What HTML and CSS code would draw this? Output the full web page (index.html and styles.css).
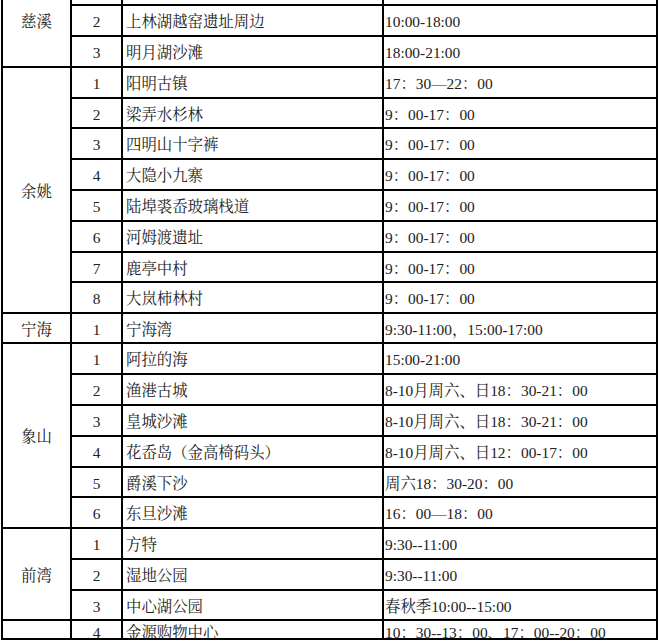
FILE: index.html
```html
<!DOCTYPE html>
<html lang="zh-CN">
<head>
<meta charset="utf-8">
<title>夜游景点开放时间</title>
<link rel="stylesheet" href="styles.css">
</head>
<body>
<table class="sched">
  <colgroup>
    <col class="c-city"><col class="c-num"><col class="c-name"><col class="c-time">
  </colgroup>
  <tbody>
    <tr class="r31"><td class="city" rowspan="3">慈溪</td><td class="num"></td><td class="name"></td><td class="time"></td></tr>
    <tr class="r31"><td class="num">2</td><td class="name">上林湖越窑遗址周边</td><td class="time">10:00-18:00</td></tr>
    <tr class="r31"><td class="num">3</td><td class="name">明月湖沙滩</td><td class="time">18:00-21:00</td></tr>

    <tr class="r31"><td class="city" rowspan="8">余姚</td><td class="num">1</td><td class="name">阳明古镇</td><td class="time">17：30—22：00</td></tr>
    <tr class="r30"><td class="num">2</td><td class="name">梁弄水杉林</td><td class="time">9：00-17：00</td></tr>
    <tr class="r31"><td class="num">3</td><td class="name">四明山十字裤</td><td class="time">9：00-17：00</td></tr>
    <tr class="r31"><td class="num">4</td><td class="name">大隐小九寨</td><td class="time">9：00-17：00</td></tr>
    <tr class="r31"><td class="num">5</td><td class="name">陆埠裘岙玻璃栈道</td><td class="time">9：00-17：00</td></tr>
    <tr class="r31"><td class="num">6</td><td class="name">河姆渡遗址</td><td class="time">9：00-17：00</td></tr>
    <tr class="r30"><td class="num">7</td><td class="name">鹿亭中村</td><td class="time">9：00-17：00</td></tr>
    <tr class="r31"><td class="num">8</td><td class="name">大岚柿林村</td><td class="time">9：00-17：00</td></tr>

    <tr class="r30"><td class="city">宁海</td><td class="num">1</td><td class="name">宁海湾</td><td class="time">9:30-11:00，15:00-17:00</td></tr>

    <tr class="r31"><td class="city" rowspan="6">象山</td><td class="num">1</td><td class="name">阿拉的海</td><td class="time">15:00-21:00</td></tr>
    <tr class="r31"><td class="num">2</td><td class="name">渔港古城</td><td class="time">8-10月周六、日18：30-21：00</td></tr>
    <tr class="r31"><td class="num">3</td><td class="name">皇城沙滩</td><td class="time">8-10月周六、日18：30-21：00</td></tr>
    <tr class="r31"><td class="num">4</td><td class="name">花岙岛（金高椅码头）</td><td class="time">8-10月周六、日12：00-17：00</td></tr>
    <tr class="r30"><td class="num">5</td><td class="name">爵溪下沙</td><td class="time">周六18：30-20：00</td></tr>
    <tr class="r31"><td class="num">6</td><td class="name">东旦沙滩</td><td class="time">16：00—18：00</td></tr>

    <tr class="r31"><td class="city" rowspan="3">前湾</td><td class="num">1</td><td class="name">方特</td><td class="time">9:30--11:00</td></tr>
    <tr class="r31"><td class="num">2</td><td class="name">湿地公园</td><td class="time">9:30--11:00</td></tr>
    <tr class="r30"><td class="num">3</td><td class="name">中心湖公园</td><td class="time">春秋季10:00--15:00</td></tr>

    <tr class="r19 cut"><td class="city"><div class="clip"></div></td><td class="num"><div class="clip">4</div></td><td class="name"><div class="clip">金源购物中心</div></td><td class="time"><div class="clip">10：30--13：00、17：00--20：00</div></td></tr>
  </tbody>
</table>
</body>
</html>
```

FILE: styles.css
```css
html, body {
  margin: 0;
  padding: 0;
  background: #ffffff;
}

.sched {
  border-collapse: collapse;
  table-layout: fixed;
  width: 657px;
  margin: -27px 0 0 1px;
  font-family: "Liberation Serif", "Noto Serif CJK SC", "Noto Sans CJK SC", serif;
  font-size: 15.4px;
  line-height: 20px;
  color: #222222;
}

.c-city { width: 69px; }
.c-num { width: 51px; }
.c-name { width: 261px; }
.c-time { width: 274px; }

.sched td {
  border: 2px solid #000000;
  padding: 3px 0 0 0;
  vertical-align: middle;
  white-space: nowrap;
  overflow: hidden;
}

.r31 { height: 31px; }
.r30 { height: 30px; }
.r19 { height: 19px; }

.city, .num { text-align: center; }
.name { padding-left: 3px !important; }
.time { padding-left: 1px !important; }

.cut td {
  vertical-align: top;
  padding-top: 0;
}

.clip {
  height: 17px;
  overflow: hidden;
  padding-top: 2px;
  box-sizing: border-box;
}
```
